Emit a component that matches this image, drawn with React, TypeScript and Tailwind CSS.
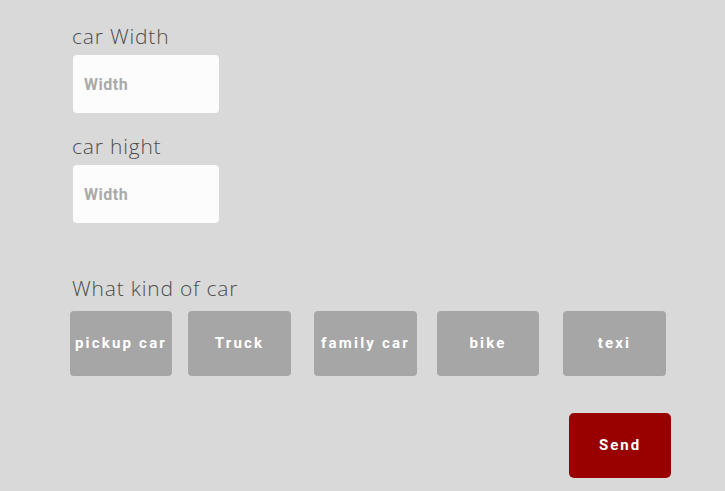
import React from "react";

const label =
  "h-[20px] flex items-end text-[21px] leading-none tracking-[0.8px] text-[#4d4d4d] font-light font-['Open_Sans',sans-serif]";

function Field({ title }: { title: string }) {
  return (
    <div className="flex flex-col">
      <div className={label}>{title}</div>
      <input
        placeholder="Width"
        className="mt-[8px] ml-[1px] w-[146px] h-[58px] rounded-[4px] bg-[#fcfcfc] px-[11px] text-[16px] tracking-[0.5px] font-bold font-['Roboto',sans-serif] text-[#666] placeholder:text-[#aaaaaa] outline-none"
      />
    </div>
  );
}

export default function App() {
  const cars = [
    { t: "pickup car", c: "w-[102px] mr-[16px]" },
    { t: "Truck", c: "w-[103px] mr-[23px]" },
    { t: "family car", c: "w-[103px] mr-[20px]" },
    { t: "bike", c: "w-[102px] mr-[24px]" },
    { t: "texi", c: "w-[103px]" },
  ];
  return (
    <div className="w-[725px] h-[491px] bg-[#d9d9d9] overflow-hidden">
      <div className="pl-[72px] pt-[27px] flex flex-col">
        <Field title="car Width" />
        <div className="h-[24px]" />
        <Field title="car hight" />
        <div className="h-[56px]" />
        <div className={label}>What kind of car</div>
        <div className="flex mt-[12px] -ml-[2px]">
          {cars.map((c) => (
            <button
              key={c.t}
              className={
                "h-[65px] rounded-[4px] bg-[#a6a6a6] text-white text-[15px] font-bold font-['Roboto',sans-serif] tracking-[2.2px] flex items-center justify-center whitespace-nowrap " +
                c.c
              }
            >
              {c.t}
            </button>
          ))}
        </div>
        <div className="flex mt-[37px] pl-[497px]">
          <button className="w-[102px] h-[65px] rounded-[5px] bg-[#990000] text-white text-[15px] font-bold font-['Roboto',sans-serif] tracking-[2px] flex items-center justify-center">
            Send
          </button>
        </div>
      </div>
    </div>
  );
}
